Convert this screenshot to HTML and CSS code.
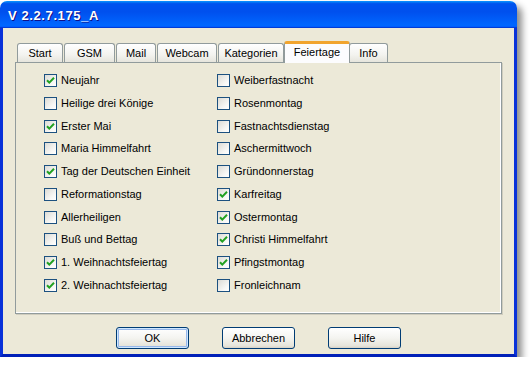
FILE: index.html
```html
<!DOCTYPE HTML>
<html lang="de">
<head>
    <meta charset="UTF-8">
    <title>V 2.2.7.175_A</title>
    <link rel="stylesheet" href="styles.css">
</head>
<body>
    <div class="window">
        <div class="titlebar">V 2.2.7.175_A</div>
        <div class="frame">
            <div class="tabs">
                <div class="tab tab-start">Start</div>
                <div class="tab tab-gsm">GSM</div>
                <div class="tab tab-mail">Mail</div>
                <div class="tab tab-webcam">Webcam</div>
                <div class="tab tab-kat">Kategorien</div>
                <div class="tab tab-feier active">Feiertage</div>
                <div class="tab tab-info">Info</div>
            </div>
            <div class="panel">
                <ul class="col">
                    <li><span class="box on"><svg viewBox="0 0 11 11"><path d="M2 5.2 L4.3 7.6 L9 2.8"/></svg></span>Neujahr</li>
                    <li><span class="box"></span>Heilige drei Könige</li>
                    <li><span class="box on"><svg viewBox="0 0 11 11"><path d="M2 5.2 L4.3 7.6 L9 2.8"/></svg></span>Erster Mai</li>
                    <li><span class="box"></span>Maria Himmelfahrt</li>
                    <li><span class="box on"><svg viewBox="0 0 11 11"><path d="M2 5.2 L4.3 7.6 L9 2.8"/></svg></span>Tag der Deutschen Einheit</li>
                    <li><span class="box"></span>Reformationstag</li>
                    <li><span class="box"></span>Allerheiligen</li>
                    <li><span class="box"></span>Buß und Bettag</li>
                    <li><span class="box on"><svg viewBox="0 0 11 11"><path d="M2 5.2 L4.3 7.6 L9 2.8"/></svg></span>1. Weihnachtsfeiertag</li>
                    <li><span class="box on"><svg viewBox="0 0 11 11"><path d="M2 5.2 L4.3 7.6 L9 2.8"/></svg></span>2. Weihnachtsfeiertag</li>
                </ul>
                <ul class="col">
                    <li><span class="box"></span>Weiberfastnacht</li>
                    <li><span class="box"></span>Rosenmontag</li>
                    <li><span class="box"></span>Fastnachtsdienstag</li>
                    <li><span class="box"></span>Aschermittwoch</li>
                    <li><span class="box"></span>Gründonnerstag</li>
                    <li><span class="box on"><svg viewBox="0 0 11 11"><path d="M2 5.2 L4.3 7.6 L9 2.8"/></svg></span>Karfreitag</li>
                    <li><span class="box on"><svg viewBox="0 0 11 11"><path d="M2 5.2 L4.3 7.6 L9 2.8"/></svg></span>Ostermontag</li>
                    <li><span class="box on"><svg viewBox="0 0 11 11"><path d="M2 5.2 L4.3 7.6 L9 2.8"/></svg></span>Christi Himmelfahrt</li>
                    <li><span class="box on"><svg viewBox="0 0 11 11"><path d="M2 5.2 L4.3 7.6 L9 2.8"/></svg></span>Pfingstmontag</li>
                    <li><span class="box"></span>Fronleichnam</li>
                </ul>
            </div>
            <div class="buttons">
                <button class="btn default">OK</button>
                <button class="btn">Abbrechen</button>
                <button class="btn">Hilfe</button>
            </div>
        </div>
    </div>
</body>
</html>
```

FILE: styles.css
```css
body{margin:0;background:#fff;font-family:"Liberation Sans",Arial,sans-serif;font-size:11px;color:#000;}
ul,li{margin:0;padding:0;list-style:none;}

.window{
    width:517px;
    height:356px;
    margin-top:1px;
    display:flex;
    flex-direction:column;
    border-radius:7px 7px 0 0;
    box-shadow:5px 5px 7px rgba(0,0,0,.45);
}
.titlebar{
    height:27px;
    padding:0 0 0 8px;
    box-sizing:border-box;
    border-radius:7px 7px 0 0;
    background:linear-gradient(to bottom,#0997ff 0%,#0053ee 10%,#0050ee 40%,#0066ff 88%,#0066ff 93%,#005bff 95%,#003dd7 96%,#003dd7 100%);
    color:#fff;
    font-size:13px;
    font-weight:bold;
    letter-spacing:.6px;
    line-height:29px;
    text-shadow:1px 1px #0f1089;
}
.frame{
    flex:1;
    display:flex;
    flex-direction:column;
    background:#ece9d8;
    border:3px solid #0831d9;
    border-top:none;
    border-bottom-color:#0020b8;
}
.tabs{
    display:flex;
    align-items:flex-end;
    height:21px;
    margin:13px 0 0 14px;
    position:relative;
    z-index:1;
}
.tab{
    height:19px;
    box-sizing:border-box;
    margin-right:1px;
    border:1px solid #919b9c;
    border-bottom:none;
    border-radius:3px 3px 0 0;
    background:linear-gradient(to bottom,#fff,#f3f3ef 60%,#e6e5dd);
    text-align:center;
    line-height:18px;
}
.tab-start{width:46px;}
.tab-gsm{width:51px;}
.tab-mail{width:40px;}
.tab-webcam{width:60px;}
.tab-kat{width:66px;}
.tab-feier{width:66px;}
.tab-info{width:39px;margin-left:-1px;}
.tab.active{
    height:22px;
    margin:0 0 -1px -1px;
    border-top:3px solid #f1a42e;
    border-radius:3px 3px 0 0;
    background:#fcfcfe;
    line-height:17px;
}
.panel{
    height:252px;
    box-sizing:border-box;
    margin:0 12px;
    padding:11px 0 0 28px;
    display:flex;
    border:1px solid #919b9c;
    box-shadow:inset -1px -1px 0 #fff,1px 1px 0 #d0cdbe;
}
.col{
    width:173px;
}
.col li{
    height:22.75px;
    display:flex;
    align-items:flex-start;
    line-height:13px;
}
.box{
    width:13px;
    height:13px;
    box-sizing:border-box;
    margin-right:4px;
    border:1px solid #1c5180;
    background:linear-gradient(135deg,#dcdbd5,#f8f8f6 70%,#fff);
    flex:none;
}
.box svg{
    display:block;
    width:11px;
    height:11px;
}
.box path{
    fill:none;
    stroke:#21a121;
    stroke-width:2;
}
.buttons{
    display:flex;
    justify-content:center;
    gap:33px;
    margin-top:13px;
}
.btn{
    width:73px;
    height:22px;
    padding:0;
    border:1px solid #003c74;
    border-radius:3px;
    background:linear-gradient(to bottom,#fff,#f4f4f0 50%,#e6e4da 90%,#d6d0c5);
    font-family:"Liberation Sans",Arial,sans-serif;
    font-size:11px;
    color:#000;
}
.btn.default{
    box-shadow:inset 0 0 0 1px #cee7ff,inset 0 0 0 2px #98b8ea;
}
```
